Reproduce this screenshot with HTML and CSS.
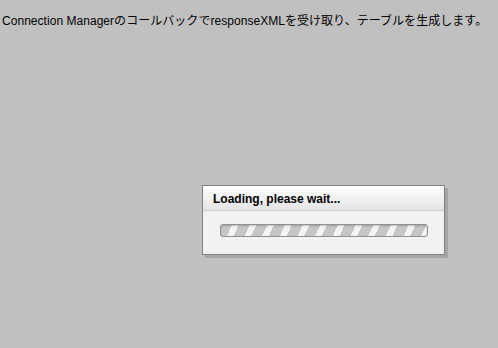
FILE: index.html
```html
<!DOCTYPE html>
<html lang="ja">
<head>
    <meta charset="UTF-8">
    <title>Connection Manager</title>
    <link rel="stylesheet" href="styles.css">
</head>
<body>
    <p class="intro">Connection ManagerのコールバックでresponseXMLを受け取り、テーブルを生成します。</p>

    <div class="wait_panel">
        <div class="hd">Loading, please wait...</div>
        <div class="bd">
            <div class="progress"></div>
        </div>
    </div>
</body>
</html>
```

FILE: styles.css
```css
body {
    margin: 0;
    background: #c0c0c0;
    font-family: "Liberation Sans", "Noto Sans CJK JP", sans-serif;
    color: #000;
    height: 348px;
    position: relative;
}

.intro {
    margin: 0;
    padding: 13px 0 0 2px;
    font-size: 12px;
    line-height: 16px;
    white-space: nowrap;
    letter-spacing: 0.04px;
}

/* loading panel */
.wait_panel {
    position: absolute;
    left: 202px;
    top: 185px;
    width: 241px;
    border: 1px solid #808080;
    background: #f2f2f2;
    box-shadow: 3px 3px 0 #a6a6a6;
}

.wait_panel .hd {
    height: 24px;
    line-height: 26px;
    padding-left: 10px;
    font-size: 12px;
    font-weight: bold;
    color: #000;
    border-bottom: 1px solid #cfcfcf;
    background-image: linear-gradient(#ffffff, #e4e4e4);
}

.wait_panel .bd {
    padding: 13px 16px 17px 17px;
}

.progress {
    height: 11px;
    border: 1px solid #909090;
    border-radius: 3px;
    background-color: #c8c8c8;
    background-image: repeating-linear-gradient(115deg, #c6c6c6 0 10px, #f4f4f4 10px 16px);
    box-shadow: inset 0 1px 2px rgba(0, 0, 0, 0.2);
}
```
